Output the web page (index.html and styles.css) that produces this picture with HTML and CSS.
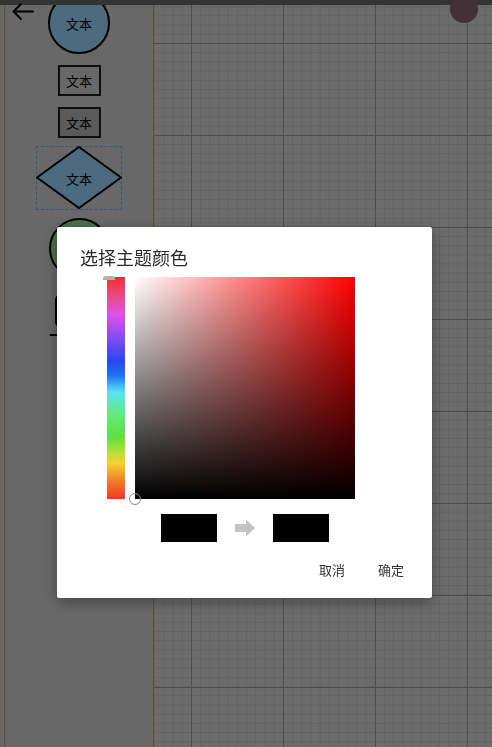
FILE: index.html
```html
<!DOCTYPE html>
<html lang="zh-CN">
<head>
<meta charset="utf-8">
<title>选择主题颜色</title>
<link rel="stylesheet" href="styles.css">
</head>
<body>
<div class="app">
  <aside class="palette">
    <div class="palette-inner">
      <div class="shape circle blue"><span>文本</span></div>
      <div class="shape rect first"><span>文本</span></div>
      <div class="shape rect dark"><span>文本</span></div>
      <div class="shape diamond-wrap">
        <svg class="diamond" viewBox="0 0 86 64" width="86" height="64"><polygon points="43,1 85,31.5 43,62 1,31.5"/></svg>
        <span>文本</span>
      </div>
      <div class="shape circle green"></div>
      <div class="shape terminator"></div>
      <div class="shape line"></div>
    </div>
  </aside>
  <main class="canvas"></main>
  <div class="topbar"></div>
  <button class="back" aria-label="返回">
    <svg viewBox="0 0 26 24" width="26" height="24"><path d="M23 11.5H4M11 4L3.5 11.5L11 19" fill="none" stroke="#000" stroke-width="2" stroke-linecap="round" stroke-linejoin="round"/></svg>
  </button>
  <button class="fab" aria-label="菜单"></button>
</div>

<div class="scrim">
  <div class="dialog">
    <h2 class="dialog-title">选择主题颜色</h2>
    <div class="picker">
      <div class="hue"><span class="hue-thumb"></span></div>
      <div class="sv"><span class="sv-thumb"></span></div>
    </div>
    <div class="preview">
      <div class="swatch"></div>
      <svg class="arrow" viewBox="0 0 20 18" width="20" height="18"><path d="M0 5H11V0.5L20 9L11 17.5V13H0Z" fill="#c4c4c4"/></svg>
      <div class="swatch"></div>
    </div>
    <div class="actions">
      <button class="btn">取消</button>
      <button class="btn">确定</button>
    </div>
  </div>
</div>
</body>
</html>
```
FILE: styles.css
```css
* { box-sizing: border-box; }
html, body { margin: 0; padding: 0; }
body {
  width: 492px;
  height: 747px;
  overflow: hidden;
  font-family: "Noto Sans CJK SC", "Noto Sans", sans-serif;
}

.app {
  position: relative;
  display: flex;
  height: 747px;
  overflow: hidden;
}

.palette {
  width: 154px;
  flex: none;
  background: #b9b9b9;
  padding-left: 4px;
  border-right: 1px solid #b08c50;
}
.palette-inner {
  height: 100%;
  border-left: 1px solid #b08c50;
  display: flex;
  flex-direction: column;
  align-items: center;
}

.shape {
  position: relative;
  display: flex;
  align-items: center;
  justify-content: center;
  font-size: 13px;
  color: #000;
  flex: none;
}
.circle {
  width: 62px;
  height: 62px;
  border-radius: 50%;
  border: 2px solid #000;
}
.blue { background: #8abfe2; margin-top: -8px; }
.green { background: #84c884; width: 61px; height: 61px; margin-top: 8px; }

.rect {
  width: 43px;
  height: 31px;
  border: 2px solid #1a1a1a;
  background: #b9b9b9;
}
.rect.first { margin-top: 11px; }
.rect.dark { background: #a0a0a0; margin-top: 11px; }

.diamond-wrap {
  width: 86px;
  height: 64px;
  margin-top: 8px;
  border: 1px dashed #5ca2c6;
}
.diamond {
  position: absolute;
  left: -1px;
  top: -1px;
}
.diamond polygon {
  fill: #8abfe2;
  stroke: #000;
  stroke-width: 2;
}
.diamond-wrap span { position: relative; }

.terminator {
  width: 48px;
  height: 34px;
  margin-top: 15px;
  border: 2px solid #000;
  border-radius: 6px;
}
.line {
  width: 58px;
  height: 2px;
  margin-top: 6px;
  background: #000;
}

.canvas {
  flex: 1;
  background-color: #c0c0c0;
  background-image:
    linear-gradient(to right, #8c8c8c 1px, transparent 1px),
    linear-gradient(to bottom, #8c8c8c 1px, transparent 1px),
    linear-gradient(to right, #b0b0b0 1px, transparent 1px),
    linear-gradient(to bottom, #b0b0b0 1px, transparent 1px);
  background-size: 92px 92px, 92px 92px, 9.2px 9.2px, 9.2px 9.2px;
  background-position: 37px 43px;
}

.topbar {
  position: absolute;
  left: 0;
  top: 0;
  right: 0;
  height: 5px;
  background: #5e5e5e;
}
.back {
  position: absolute;
  left: 10px;
  top: 0;
  width: 26px;
  height: 24px;
  padding: 0;
  border: 0;
  background: none;
}
.back svg { display: block; }
.fab {
  position: absolute;
  left: 450px;
  top: -5px;
  width: 28px;
  height: 28px;
  padding: 0;
  border: 0;
  border-radius: 50%;
  background: #7e5662;
}

.scrim {
  position: fixed;
  inset: 0;
  background: rgba(0, 0, 0, 0.44);
  display: flex;
  justify-content: flex-start;
  align-items: flex-start;
}

.dialog {
  margin: 227px 0 0 57px;
  width: 375px;
  background: #fff;
  border-radius: 2px;
  box-shadow: 0 4px 14px rgba(0, 0, 0, 0.35);
  padding: 18px 0 18px;
}
.dialog-title {
  margin: 0;
  padding: 0 23px;
  font-size: 18px;
  line-height: 24px;
  font-weight: 400;
  color: #2a2a2a;
}

.picker {
  display: flex;
  gap: 10px;
  padding-left: 50px;
  margin-top: 8px;
}
.hue {
  position: relative;
  width: 18px;
  height: 222px;
  background: linear-gradient(to bottom,
    #ef3030 0%,
    #e84a8a 9%,
    #e052e8 17%,
    #6a4cf0 30%,
    #2a48f0 38%,
    #1e6ef0 44%,
    #5ae4f2 52%,
    #66e87a 62%,
    #5ee040 72%,
    #b8e03a 79%,
    #f6d030 84%,
    #f07a2a 92%,
    #ee3a26 100%);
}
.hue-thumb {
  position: absolute;
  left: -4px;
  top: -1px;
  width: 12px;
  height: 4px;
  border-radius: 3px 3px 0 0;
  background: #aab4aa;
}
.sv {
  position: relative;
  width: 220px;
  height: 222px;
  background:
    linear-gradient(to top, #000, rgba(0, 0, 0, 0)),
    linear-gradient(to right, #fff, rgba(255, 255, 255, 0)),
    #ff0000;
}
.sv-thumb {
  position: absolute;
  left: -6px;
  bottom: -6px;
  width: 12px;
  height: 12px;
  border-radius: 50%;
  border: 1.5px solid #8a8a8a;
}

.preview {
  display: flex;
  align-items: center;
  justify-content: center;
  gap: 18px;
  margin-top: 15px;
}
.swatch {
  width: 56px;
  height: 28px;
  background: #000;
}
.arrow { display: block; }

.actions {
  display: flex;
  justify-content: flex-end;
  gap: 33px;
  padding-right: 28px;
  margin-top: 18px;
}
.btn {
  padding: 0;
  border: 0;
  background: none;
  font-family: inherit;
  font-size: 13px;
  line-height: 20px;
  color: #333;
}
```
